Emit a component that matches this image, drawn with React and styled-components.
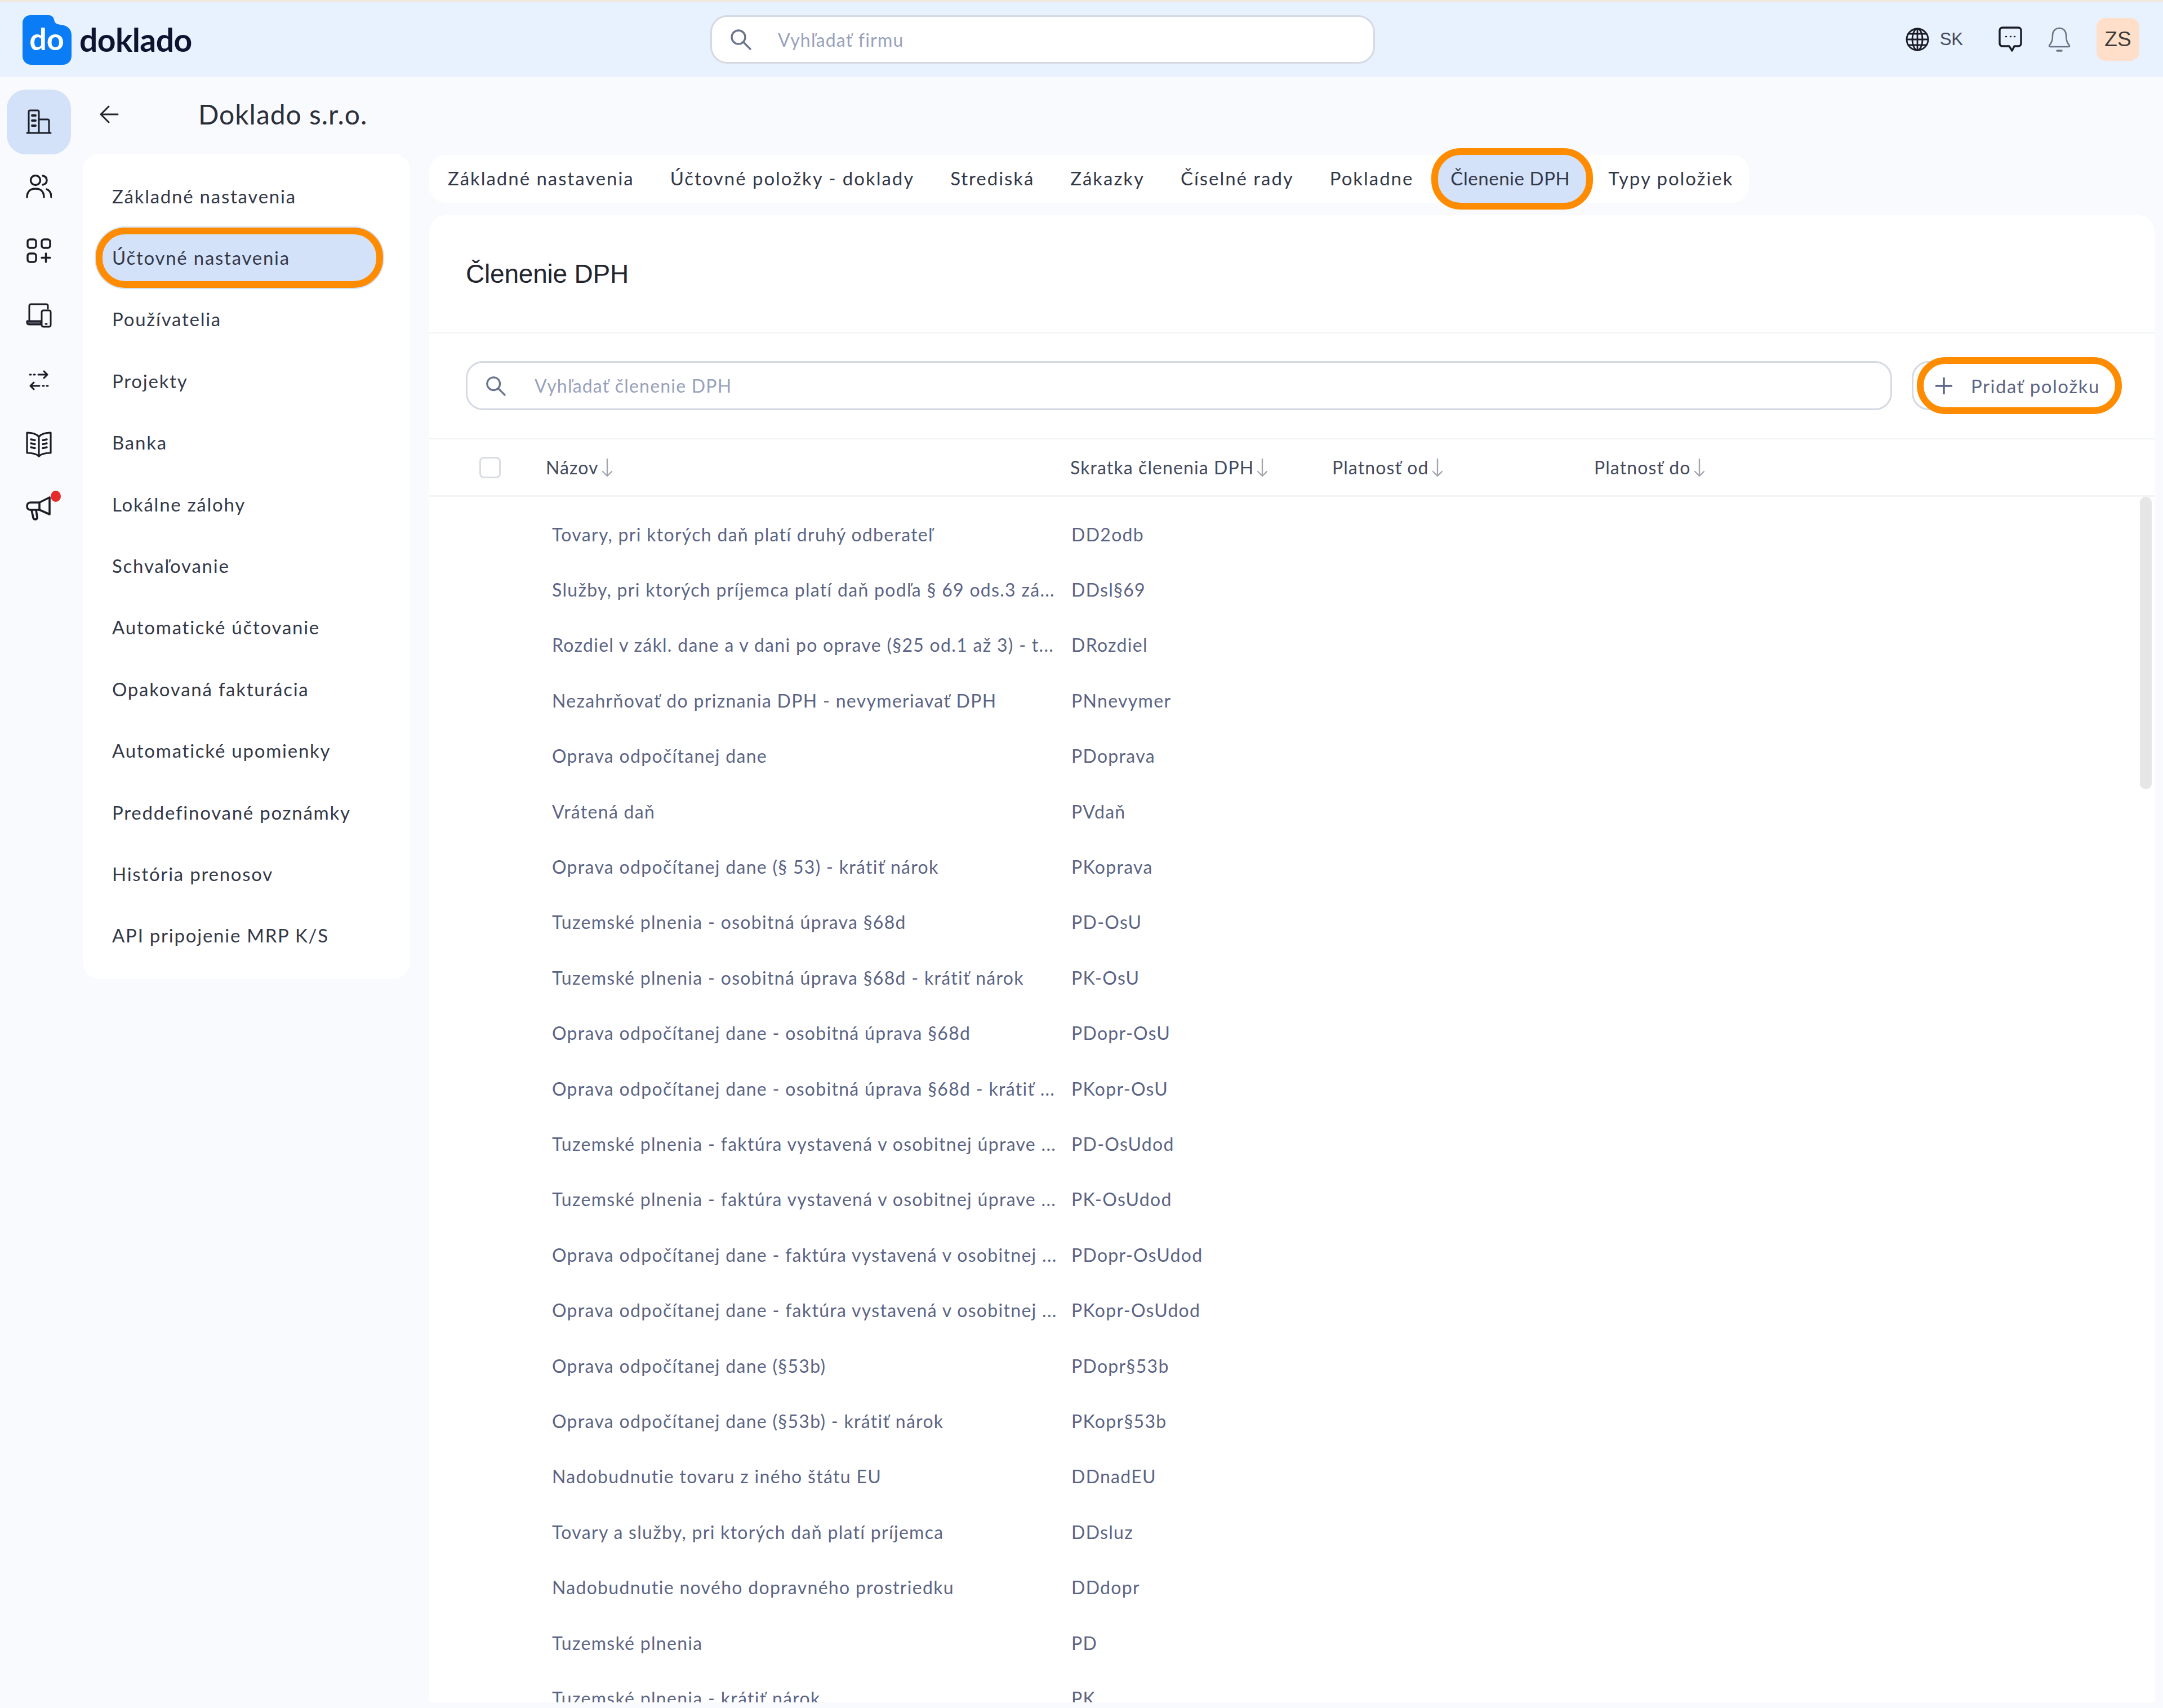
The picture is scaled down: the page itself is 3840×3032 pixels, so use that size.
import React from "react";
import styled, { createGlobalStyle } from "styled-components";

const Global = createGlobalStyle`
  html, body { margin: 0; padding: 0; background: #f9fafd; }
  * { box-sizing: border-box; }
`;
const FONT = `"Lato", "Noto Sans", sans-serif`;

const Page = styled.div`
  width: 3840px; height: 3032px; overflow: hidden; background: #f9fafd;
  border-top: 4px solid #efe9e2; font-family: ${FONT}; color: #2b3142;
`;
const Header = styled.header`
  height: 132px; background: #e8f1fe; display: grid;
  grid-template-columns: 1261px 1180px 1fr; align-items: center;
`;
const Brand = styled.div`
  display: flex; align-items: center; gap: 14px; padding-left: 40px; height: 100%;
`;
const LogoMark = styled.svg`width: 87px; height: 88px; display: block; margin-top: 2px;`;
const LogoText = styled.span`
  font-size: 57px; font-weight: 700; color: #0e1430; letter-spacing: -0.6px; line-height: 1;
`;
const SearchBox = styled.div`
  display: flex; align-items: center; background: #fff; border: 3px solid #d5d9e2;
  border-radius: 30px; height: ${p => p.$h}px; flex: ${p => p.$grow ? 1 : "none"};
  padding-left: 31px; gap: ${p => p.$gap}px;
`;
const SearchText = styled.span`
  font-size: 32px; color: #98a1ba; letter-spacing: 1.2px; white-space: nowrap;
`;
const HeaderRight = styled.div`
  display: flex; align-items: center; justify-content: flex-end; padding-right: 42px;
`;
const Lang = styled.span`
  font-size: 31px; color: #434a5c; margin: 0 63px 0 19px; letter-spacing: 0; font-family: "Liberation Sans", sans-serif;
`;
const Avatar = styled.div`
  width: 76px; height: 76px; border-radius: 16px; background: #ffdfc9; color: #3c3a3a;
  display: flex; align-items: center; justify-content: center; font-size: 37px;
  margin-left: 46px; font-family: "Liberation Sans", sans-serif;
`;
const Body = styled.div`display: flex; height: 2896px;`;
const Rail = styled.nav`
  width: 147px; flex: none; padding: 23px 0 0 12px; display: flex; flex-direction: column;
`;
const RailBtn = styled.div`
  width: 114px; height: 114.6px; flex: none; position: relative; display: flex; align-items: center; justify-content: center;
  background: ${p => p.$active ? "#d3e1f9" : "transparent"};
  border-radius: 34px;
`;
const Dot = styled.span`
  position: absolute; width: 18px; height: 20px; border-radius: 50%; background: #e52b2b; top: 24px; left: 78px;
`;
const SideCol = styled.div`width: 615px; flex: none;`;
const TitleRow = styled.div`
  height: 137px; display: flex; align-items: center; padding: 0 0 4px 30px;
`;
const Company = styled.h1`
  margin: 0 0 0 141px; font-weight: 400; font-size: 48px; color: #2b2f3a; letter-spacing: 0.95px; white-space: nowrap;
`;
const Menu = styled.ul`
  width: 581px; margin: 0; padding: 20px 0 23px; list-style: none; background: #fff; border-radius: 30px;
`;
const MenuItem = styled.li`
  height: 109.4px; display: flex; align-items: center; padding-left: 52px;
  font-size: 33px; letter-spacing: 1.75px; color: #333847; white-space: nowrap;
`;
const MenuActive = styled(MenuItem)`
  height: 107px; margin: 1.2px 48px 1.2px 23px; padding-left: 17px; background: #d3e1f9;
  border: 12px solid #ff8c00; border-radius: 52px; box-shadow: 0 0 0 2px #d3e1f9;
`;
const MainCol = styled.div`
  width: 3063px; flex: none; padding-top: 139px; margin-left: 0;
`;
const Tabs = styled.div`
  height: 85px; width: 2343px; background: #fff; border-radius: 30px; display: flex; align-items: center; padding-left: 1px;
`;
const Tab = styled.div`
  padding: 0 32px 3px; font-size: 33px; letter-spacing: 1.95px; color: #333847; white-space: nowrap; flex: none;
`;
const TabActive = styled(Tab)`
  height: 109px; display: flex; align-items: center; padding: 0 29px 3px 22px; margin-right: -5px;
  letter-spacing: 0.55px; background: #d3e1f9; border: 12px solid #ff8c00; border-radius: 52px;
`;
const Panel = styled.section`
  margin-top: 22px; height: 2640px; background: #fff; border-radius: 30px 30px 0 0; overflow: hidden; display: flex; flex-direction: column;
`;
const PanelHead = styled.div`
  height: 210px; flex: none; display: flex; align-items: center; padding-left: 65px; border-bottom: 3px solid #f3f4f6;
`;
const PanelTitle = styled.h2`
  margin: 0; font: 400 46px "Liberation Sans", sans-serif; color: #22252d; letter-spacing: -0.2px;
`;
const Toolbar = styled.div`
  height: 188px; flex: none; display: flex; align-items: center; gap: 35px; padding: 0 65px; border-bottom: 3px solid #f3f4f6;
`;
const AddBtn = styled.div`
  position: relative; width: 366px; flex: none; height: 87px; border: 3px solid #d5d9e2; border-radius: 30px;
  display: flex; align-items: center; padding-left: 39px; gap: 33px; background: #fff;
  font-size: 33px; letter-spacing: 1.5px; color: #5b6484; white-space: nowrap;
  &::after {
    content: ""; position: absolute; left: 6px; top: -10px; right: -10px; bottom: -10px;
    border: 12px solid #ff8c00; border-radius: 56px;
  }
`;
const TableHead = styled.div`
  height: 102px; flex: none; display: grid; grid-template-columns: 142px 931px 465px 465px 465px; align-items: center;
  padding-left: 65px; border-bottom: 3px solid #f3f4f6;
`;
const Check = styled.div`
  width: 38px; height: 38px; margin-left: 24px; border: 3px solid #d9dce3; border-radius: 8px; background: #fff;
`;
const HeadCell = styled.div`
  display: flex; align-items: center; gap: 4px; font-size: 32px; color: #434a5c; letter-spacing: 1.1px; white-space: nowrap;
`;
const TableBody = styled.div`position: relative; flex: 1; padding-top: 17px; overflow: hidden;`;
const Thumb = styled.div`
  position: absolute; right: 5px; top: 0; width: 21px; height: 519px; background: #e6e6e6; border-radius: 10px;
`;
const Row = styled.div`
  height: 98.4px; display: grid; grid-template-columns: 142px 931px 1395px; align-items: center; padding-left: 65px;
`;
const Cell = styled.div`
  grid-column: ${p => p.$col}; padding-left: ${p => p.$pad}px; font-size: 32px; color: #5b6484;
  letter-spacing: 1.3px; white-space: nowrap; overflow: visible;
`;

const stroke = { fill: "none", stroke: "#1a1d26", strokeWidth: 3, strokeLinecap: "round", strokeLinejoin: "round" };

const Logo = () => (
  <LogoMark viewBox="0 0 87 88">
    <path d="M14 0H46C52 0 55 3 56 8C57 14 60 16 68 17C79 18 87 24 87 36V72C87 82 80 88 71 88H16C7 88 0 82 0 72V14C0 6 6 0 14 0Z" fill="#0a7cf5" />
    <text x="43" y="62" textAnchor="middle" fontSize="54" fontWeight="700" fontFamily="Lato, sans-serif" fill="#fff">do</text>
  </LogoMark>
);
const Magnifier = ({ size = 40, color = "#6b748e" }) => (
  <svg width={size} height={size} viewBox="0 0 40 40" fill="none" stroke={color} strokeWidth="3.4" strokeLinecap="round">
    <circle cx="16" cy="16" r="12" /><path d="M25 25L37 37" />
  </svg>
);
const ArrowDown = () => (
  <svg width="22" height="36" viewBox="0 0 22 36" fill="none" stroke="#a3a6ad" strokeWidth="2.4" strokeLinecap="round" strokeLinejoin="round">
    <path d="M11 3V33M3 25L11 33L19 25" />
  </svg>
);
const BackArrow = () => (
  <svg width="34" height="34" viewBox="0 0 34 34" fill="none" stroke="#23262f" strokeWidth="3" strokeLinecap="round" strokeLinejoin="round">
    <path d="M2 17H32M16 3L2 17L16 31" />
  </svg>
);
const IconBuilding = () => (
  <svg width="46" height="44" viewBox="0 0 46 44" {...stroke}>
    <path d="M2 42H44M5 42V4C5 3 6 2 7 2H21C22 2 23 3 23 4V42M23 18H39C40 18 41 19 41 20V42" />
    <path d="M11 11H17M11 20H17M11 29H17" strokeWidth="4" />
  </svg>
);
const IconUsers = () => (
  <svg width="46" height="42" viewBox="0 0 46 42" {...stroke} strokeWidth="3.4">
    <circle cx="17" cy="10" r="8.5" />
    <path d="M2 40C2 30 8 25 17 25C26 25 32 30 32 40M30 2C35 3 37 6 37 10C37 14 35 17 30 18M37 26C42 28 45 33 45 40" />
  </svg>
);
const IconApps = () => (
  <svg width="44" height="44" viewBox="0 0 44 44" {...stroke} strokeWidth="3.4">
    <rect x="2" y="2" width="15" height="15" rx="4" />
    <rect x="27" y="2" width="15" height="15" rx="4" />
    <rect x="2" y="27" width="15" height="15" rx="4" />
    <path d="M34.5 27V42M27 34.5H42" />
  </svg>
);
const IconDevices = () => (
  <svg width="46" height="44" viewBox="0 0 46 44" {...stroke}>
    <path d="M6 30V5C6 3 7 2 9 2H36C38 2 39 3 39 5V10" />
    <path d="M2 32H27V38H6C3 38 2 36 2 35Z" fill="#50545e" />
    <rect x="28" y="13" width="16" height="29" rx="3" fill="#f9fafd" />
    <path d="M35 37H37" strokeWidth="3" />
  </svg>
);
const IconTransfer = () => (
  <svg width="36" height="36" viewBox="0 0 36 36" fill="none" stroke="#1a1d26" strokeWidth="3" strokeLinecap="round" strokeLinejoin="round">
    <path d="M2 8H4M9 8H11M17 8H33M27 2L33 8L27 14" />
    <path d="M34 28H32M27 28H25M19 28H3M9 22L3 28L9 34" />
  </svg>
);
const IconBook = () => (
  <svg width="46" height="46" viewBox="0 0 46 46" {...stroke} strokeWidth="3.2">
    <path d="M23 9C18 4 10 2 2 2V38C10 38 18 39 23 44C28 39 36 38 44 38V2C36 2 28 4 23 9ZM23 9V44" />
    <path d="M9 14L16 15.5M9 21L16 22.5M9 28L16 29.5M37 14L30 15.5M37 21L30 22.5M37 28L30 29.5" strokeWidth="3.4" />
  </svg>
);
const IconMega = () => (
  <svg width="46" height="46" viewBox="0 0 46 46" {...stroke} strokeWidth="3.6">
    <path d="M8 11H24L42 2V32L24 24H8C4 24 2 21 2 17.5C2 14 4 11 8 11Z" />
    <path d="M24 11V24M10 24L13 38C14 42 21 42 20 37L18 24" />
  </svg>
);
const IconGlobe = () => (
  <svg width="42" height="42" viewBox="0 0 42 42" {...stroke} strokeWidth="2.8">
    <circle cx="21" cy="21" r="19" />
    <ellipse cx="21" cy="21" rx="9" ry="19" />
    <path d="M21 2V40M2 21H40M5 11H37M5 31H37" />
  </svg>
);
const IconChat = () => (
  <svg width="42" height="46" viewBox="0 0 42 46" {...stroke} strokeWidth="3.4" style={{ marginRight: 46 }}>
    <path d="M7 2H35C38 2 40 4 40 7V30C40 33 38 35 35 35H28L24 43L19 35H7C4 35 2 33 2 30V7C2 4 4 2 7 2Z" />
    <path d="M13 18H14M21 18H22M28 18H29" strokeWidth="2.6" />
  </svg>
);
const IconBell = () => (
  <svg width="40" height="44" viewBox="0 0 40 44" fill="none" stroke="#6b7488" strokeWidth="2.6" strokeLinecap="round" strokeLinejoin="round">
    <path d="M2 33C6 28 8 24 8 15C8 7 13 2 20 2C27 2 32 7 32 15C32 24 34 28 38 33C38 35 37 35 36 35H4C3 35 2 35 2 33Z" />
    <path d="M16 42H24" strokeWidth="3.4" />
  </svg>
);
const IconPlus = () => (
  <svg width="30" height="30" viewBox="0 0 30 30" fill="none" stroke="#5b6484" strokeWidth="3.4" strokeLinecap="round">
    <path d="M15 1V29M1 15H29" />
  </svg>
);

const railIcons = [IconBuilding, IconUsers, IconApps, IconDevices, IconTransfer, IconBook, IconMega];
const menu = ["Základné nastavenia", "Účtovné nastavenia", "Používatelia", "Projekty", "Banka", "Lokálne zálohy", "Schvaľovanie", "Automatické účtovanie", "Opakovaná fakturácia", "Automatické upomienky", "Preddefinované poznámky", "História prenosov", "API pripojenie MRP K/S"];
const tabs = ["Základné nastavenia", "Účtovné položky - doklady", "Strediská", "Zákazky", "Číselné rady", "Pokladne", "Členenie DPH", "Typy položiek"];
const heads = ["Názov", "Skratka členenia DPH", "Platnosť od", "Platnosť do"];
const rows = [
  ["Tovary, pri ktorých daň platí druhý odberateľ", "DD2odb"],
  ["Služby, pri ktorých príjemca platí daň podľa § 69 ods.3 zá...", "DDsl§69"],
  ["Rozdiel v zákl. dane a v dani po oprave (§25 od.1 až 3) - t...", "DRozdiel"],
  ["Nezahrňovať do priznania DPH - nevymeriavať DPH", "PNnevymer"],
  ["Oprava odpočítanej dane", "PDoprava"],
  ["Vrátená daň", "PVdaň"],
  ["Oprava odpočítanej dane (§ 53) - krátiť nárok", "PKoprava"],
  ["Tuzemské plnenia - osobitná úprava §68d", "PD-OsU"],
  ["Tuzemské plnenia - osobitná úprava §68d - krátiť nárok", "PK-OsU"],
  ["Oprava odpočítanej dane - osobitná úprava §68d", "PDopr-OsU"],
  ["Oprava odpočítanej dane - osobitná úprava §68d - krátiť ...", "PKopr-OsU"],
  ["Tuzemské plnenia - faktúra vystavená v osobitnej úprave ...", "PD-OsUdod"],
  ["Tuzemské plnenia - faktúra vystavená v osobitnej úprave ...", "PK-OsUdod"],
  ["Oprava odpočítanej dane - faktúra vystavená v osobitnej ...", "PDopr-OsUdod"],
  ["Oprava odpočítanej dane - faktúra vystavená v osobitnej ...", "PKopr-OsUdod"],
  ["Oprava odpočítanej dane (§53b)", "PDopr§53b"],
  ["Oprava odpočítanej dane (§53b) - krátiť nárok", "PKopr§53b"],
  ["Nadobudnutie tovaru z iného štátu EU", "DDnadEU"],
  ["Tovary a služby, pri ktorých daň platí príjemca", "DDsluz"],
  ["Nadobudnutie nového dopravného prostriedku", "DDdopr"],
  ["Tuzemské plnenia", "PD"],
  ["Tuzemské plnenia - krátiť nárok", "PK"],
];

export default function App() {
  return (
    <Page>
      <Global />
      <Header>
        <Brand><Logo /><LogoText>doklado</LogoText></Brand>
        <SearchBox $h={86} $gap={46}><Magnifier /><SearchText>Vyhľadať firmu</SearchText></SearchBox>
        <HeaderRight>
          <IconGlobe /><Lang>SK</Lang><IconChat /><IconBell /><Avatar>ZS</Avatar>
        </HeaderRight>
      </Header>
      <Body>
        <Rail>
          {railIcons.map((Icon, i) => (
            <RailBtn key={i} $active={i === 0}><Icon />{i === 6 && <Dot />}</RailBtn>
          ))}
        </Rail>
        <SideCol>
          <TitleRow><BackArrow /><Company>Doklado s.r.o.</Company></TitleRow>
          <Menu>
            {menu.map((m, i) => i === 1 ? <MenuActive key={m}>{m}</MenuActive> : <MenuItem key={m}>{m}</MenuItem>)}
          </Menu>
        </SideCol>
        <MainCol>
          <Tabs>
            {tabs.map((t, i) => i === 6 ? <TabActive key={t}>{t}</TabActive> : <Tab key={t}>{t}</Tab>)}
          </Tabs>
          <Panel>
            <PanelHead><PanelTitle>Členenie DPH</PanelTitle></PanelHead>
            <Toolbar>
              <SearchBox $h={87} $gap={50} $grow><Magnifier size={38} /><SearchText>Vyhľadať členenie DPH</SearchText></SearchBox>
              <AddBtn><IconPlus />Pridať položku</AddBtn>
            </Toolbar>
            <TableHead>
              <Check />
              {heads.map(h => <HeadCell key={h}>{h}<ArrowDown /></HeadCell>)}
            </TableHead>
            <TableBody>
              <Thumb />
              {rows.map(([a, b], i) => (
                <Row key={i}>
                  <Cell $col={2} $pad={11}>{a}</Cell>
                  <Cell $col={3} $pad={2}>{b}</Cell>
                </Row>
              ))}
            </TableBody>
          </Panel>
        </MainCol>
      </Body>
    </Page>
  );
}
